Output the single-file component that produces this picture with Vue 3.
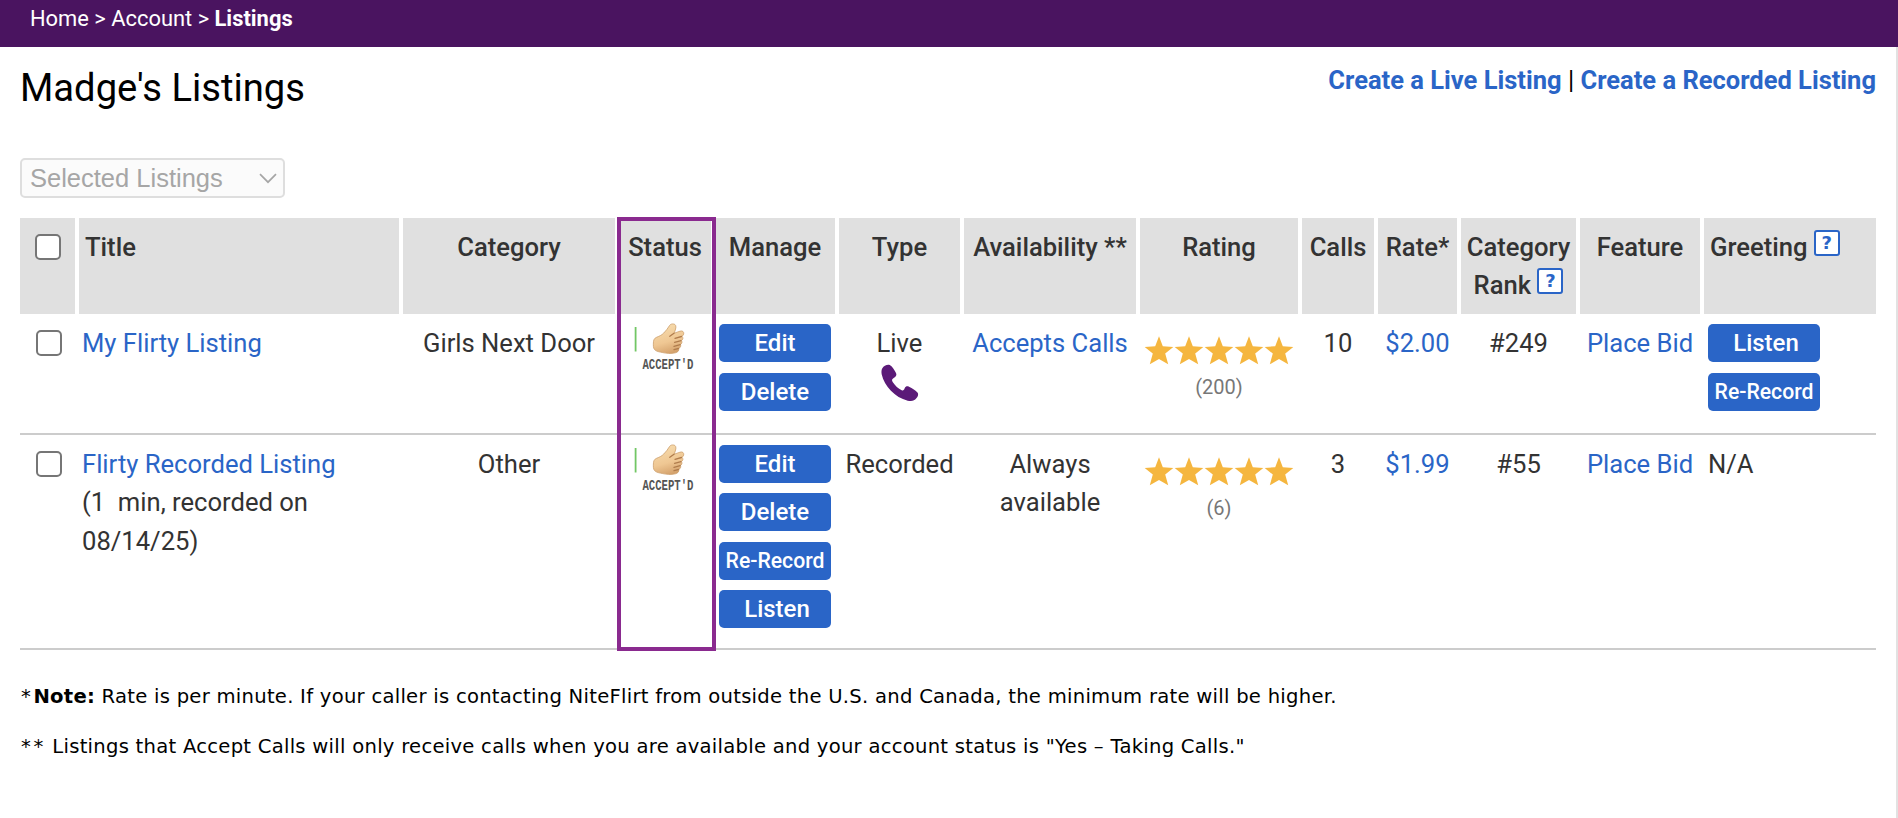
<template>
  <div class="page">
    <nav class="breadcrumb">
      Home &gt; Account &gt; <strong>Listings</strong>
    </nav>

    <main class="content">
      <header class="heading">
        <h1>Madge's Listings</h1>
        <div class="create-links">
          <a>Create a Live Listing</a> | <a>Create a Recorded Listing</a>
        </div>
      </header>

      <div class="bulk-select">
        <span>Selected Listings</span>
        <svg class="chevron" width="18" height="11" viewBox="0 0 18 11">
          <path d="M1 1.2 9 9.2 17 1.2" fill="none" stroke="#a6a6a6" stroke-width="1.7" />
        </svg>
      </div>

      <div class="table-wrap">
        <table class="listings">
          <colgroup>
            <col v-for="col in columns" :key="col.key" :class="`col-${col.key}`" />
          </colgroup>
          <thead>
            <tr>
              <th v-for="col in columns" :key="col.key" :class="col.key">
                <span v-if="col.key === 'check'" class="checkbox"></span>
                {{ col.label }}
                <span v-if="col.help" class="help">?</span>
              </th>
            </tr>
          </thead>
          <tbody>
            <tr v-for="row in listings" :key="row.title" :class="row.kind">
              <td class="check"><span class="checkbox"></span></td>
              <td class="title">
                <a>{{ row.title }}</a>
                <div v-if="row.details" class="details">{{ row.details }}</div>
              </td>
              <td>{{ row.category }}</td>
              <td class="status">
                <svg class="accepted" width="64" height="52" viewBox="0 0 64 52">
                  <defs>
                    <linearGradient id="skin" x1="0.3" y1="0" x2="0.6" y2="1">
                      <stop offset="0" stop-color="#f7dcae" />
                      <stop offset="0.6" stop-color="#efc793" />
                      <stop offset="1" stop-color="#d3a06a" />
                    </linearGradient>
                  </defs>
                  <path d="M2.600 4v24.500" stroke="#72c765" stroke-width="1.800" />
                  <path
                    d="M36.500 2.600C37.500 .6 41.500 .2 42.600 2.400C43.600 4.400 42 7.500 41.200 10.200L47 8.200C49.800 7.300 51 9 50.700 10.900C50.500 12.300 49.500 13 48.800 13.400C50.400 14.200 50.200 16.800 48.300 17.600C49.400 18.800 49 20.800 47.400 21.500C48.200 23 47.400 24.700 45.800 25.400C46.200 27.800 44.500 29.300 42.400 29.800C37.800 30.900 33.500 30.400 29.800 29.600C26.600 28.900 23.400 28.600 21.600 26.600C20.200 25 20.300 22.500 20.400 20C20.500 17.600 20.800 15.600 23.200 14.500C26 13.200 28.600 12.400 30.800 10C32.900 7.700 34.900 5.500 36.500 2.600Z"
                    fill="url(#skin)"
                    stroke="#cda06c"
                    stroke-width="0.800"
                  />
                  <path
                    d="M48.500 13.500L42 15.300M48 17.700L41.600 19.400M47.200 21.700L41 23.300M45.500 25.500L41 26.600M41 10.300L36.800 13.300"
                    fill="none"
                    stroke="#b07c4c"
                    stroke-width="1.300"
                    stroke-linecap="round"
                  />
                  <text x="9.500" y="46" textLength="51" lengthAdjust="spacingAndGlyphs">ACCEPT'D</text>
                </svg>
              </td>
              <td class="manage">
                <div class="buttons">
                  <button v-for="b in row.manage" :key="b" class="btn" :class="b.toLowerCase()">{{ b }}</button>
                </div>
              </td>
              <td>
                {{ row.type }}
                <svg v-if="row.kind === 'live'" class="phone" width="38" height="38" viewBox="34 27 114 114">
                  <path
                    d="M38 40C42 33 52 28 60 30C66 32 74 44 79 54C82 60 79 65 72 69C66 73 66 76 69 81C76 92 86 101 96 106C101 108 103 105 105 100C108 94 112 93 118 95C128 99 138 106 144 113C147 118 145 124 140 130C134 138 126 140 114 137C76 128 44 94 36 58C35 50 35 45 38 40Z"
                    fill="#5b1a78"
                  />
                </svg>
              </td>
              <td>
                <a v-if="row.kind === 'live'">{{ row.availability }}</a>
                <template v-else>{{ row.availability }}</template>
              </td>
              <td class="rating">
                <div class="stars">
                  <svg v-for="n in 5" :key="n" width="30" height="29" viewBox="0 0 30 29">
                    <path d="M15 .3 18.800 10.200 29.300 11 21.200 17.600 24.200 28.300 15 22.900 5.800 28.300 8.800 17.600 .7 11 11.200 10.200Z" fill="#f5b63f" />
                  </svg>
                </div>
                <div class="count">({{ row.ratings }})</div>
              </td>
              <td>{{ row.calls }}</td>
              <td><a>{{ row.rate }}</a></td>
              <td>{{ row.rank }}</td>
              <td><a>Place Bid</a></td>
              <td class="greeting">
                <div v-if="row.greeting.length" class="buttons">
                  <button v-for="b in row.greeting" :key="b" class="btn" :class="b.toLowerCase()">{{ b }}</button>
                </div>
                <template v-else>N/A</template>
              </td>
            </tr>
          </tbody>
        </table>
        <!-- highlight drawn over the status column -->
        <div class="status-highlight"></div>
      </div>

      <p class="note"><span class="mark">*</span><strong>Note:</strong> Rate is per minute. If your caller is contacting NiteFlirt from outside the U.S. and Canada, the minimum rate will be higher.</p>
      <p class="note"><span class="mark">**</span> Listings that Accept Calls will only receive calls when you are available and your account status is "Yes – Taking Calls."</p>
    </main>
  </div>
</template>

<script setup>
import { ref } from "vue";

const columns = [
  { key: "check", label: "" },
  { key: "title", label: "Title" },
  { key: "category", label: "Category" },
  { key: "status", label: "Status" },
  { key: "manage", label: "Manage" },
  { key: "type", label: "Type" },
  { key: "availability", label: "Availability **" },
  { key: "rating", label: "Rating" },
  { key: "calls", label: "Calls" },
  { key: "rate", label: "Rate*" },
  { key: "rank", label: "Category Rank", help: true },
  { key: "feature", label: "Feature" },
  { key: "greeting", label: "Greeting", help: true },
];

const listings = ref([
  {
    kind: "live",
    title: "My Flirty Listing",
    category: "Girls Next Door",
    manage: ["Edit", "Delete"],
    type: "Live",
    availability: "Accepts Calls",
    ratings: 200,
    calls: 10,
    rate: "$2.00",
    rank: "#249",
    greeting: ["Listen", "Re-Record"],
  },
  {
    kind: "recorded",
    title: "Flirty Recorded Listing",
    details: "(1 \u00a0min, recorded on 08/14/25)",
    category: "Other",
    manage: ["Edit", "Delete", "Re-Record", "Listen"],
    type: "Recorded",
    availability: "Always available",
    ratings: 6,
    calls: 3,
    rate: "$1.99",
    rank: "#55",
    greeting: [],
  },
]);
</script>

<style>
body {
  margin: 0;
  background: #fff;
}
</style>

<style scoped>
.page {
  box-sizing: border-box;
  height: 818px;
  overflow: hidden;
  font-family: Roboto, "Liberation Sans", sans-serif;
  font-size: 25.6px;
  color: #333;
}

.breadcrumb {
  box-sizing: border-box;
  height: 47px;
  padding: 6px 30px 0;
  background: #4a1460;
  color: #fff;
  font-size: 21.9px;
  line-height: 26px;
}

.content {
  box-sizing: border-box;
  height: 771px;
  padding: 18px 20px 0;
  border-right: 2px solid #e2e2e2;
}

.heading {
  display: flex;
  justify-content: space-between;
  height: 93px;
  color: #000;
}

h1 {
  margin: 0;
  padding-top: 1px;
  font-size: 38.2px;
  font-weight: 400;
  line-height: 45px;
}

.create-links {
  font-size: 25.5px;
  line-height: 30px;
}

.create-links a {
  font-weight: 700;
}

a {
  color: #2a65c7;
}

.bulk-select {
  box-sizing: border-box;
  display: flex;
  align-items: center;
  justify-content: space-between;
  width: 265px;
  height: 40px;
  margin-bottom: 20px;
  padding: 0 6px 0 8px;
  border: 2px solid #dedede;
  border-radius: 5px;
  background: #fbfbfb;
  color: #a6a6a6;
  font-family: "Liberation Sans", Arial, sans-serif;
  font-size: 25.5px;
  line-height: 36px;
}

.table-wrap {
  position: relative;
}

.listings {
  width: 1856px;
  table-layout: fixed;
  border-spacing: 0;
  line-height: 38.4px;
}

.col-check { width: 59px; }
.col-title { width: 324px; }
.col-category { width: 216px; }
.col-status { width: 96px; }
.col-manage { width: 124px; }
.col-type { width: 125px; }
.col-availability { width: 176px; }
.col-rating { width: 162px; }
.col-calls { width: 76px; }
.col-rate { width: 83px; }
.col-rank { width: 119px; }
.col-feature { width: 124px; }
.col-greeting { width: 172px; }

th,
td {
  box-sizing: border-box;
  padding: 10px 0 0;
  text-align: center;
  vertical-align: top;
}

th {
  height: 96px;
  border-right: 4px solid #fff;
  background: #e0e0e0;
  font-weight: 500;
}

th:last-child {
  border-right: 0;
}

td {
  padding-right: 4px;
  border-bottom: 2px solid #ccc;
}

.live td {
  height: 121px;
}

.recorded td {
  height: 215px;
}

th.title,
th.greeting {
  padding-left: 6px;
  text-align: left;
}

td.title {
  padding-left: 3px;
  text-align: left;
}

td.greeting {
  padding-left: 4px;
  text-align: left;
}

.details {
  width: 260px;
}

.checkbox {
  box-sizing: border-box;
  display: block;
  width: 26px;
  height: 26px;
  margin: 6px auto 0;
  border: 2px solid #767676;
  border-radius: 5px;
  background: #fff;
}

td .checkbox {
  margin-left: 16px;
}

/* overflow: hidden rests the box on the text baseline */
.help {
  box-sizing: border-box;
  display: inline-block;
  width: 26px;
  height: 26px;
  overflow: hidden;
  border: 2px solid #2a65c7;
  border-radius: 3px;
  background: #fff;
  color: #2a65c7;
  font-family: "DejaVu Sans", sans-serif;
  font-size: 18px;
  font-weight: 700;
  line-height: 22px;
  text-align: center;
}

.accepted {
  display: block;
  margin: -1px 0 0 14px;
  overflow: visible;
}

.accepted text {
  fill: #555;
  font-family: "Liberation Mono", monospace;
  font-size: 14px;
  font-weight: 700;
}

.buttons {
  display: flex;
  flex-direction: column;
  gap: 10.4px;
}

.live .buttons {
  gap: 11px;
}

.manage .buttons {
  align-items: center;
}

.btn {
  width: 112px;
  height: 38px;
  padding: 0;
  border: 0;
  border-radius: 5px;
  background: #2a65c7;
  color: #fff;
  font-family: inherit;
  font-size: 24px;
  font-weight: 500;
  line-height: 38px;
}

.btn.re-record {
  font-size: 21.2px;
}

.btn.listen {
  padding-left: 4px;
}

.phone {
  display: block;
  margin: 2px auto 0;
}

.stars {
  display: flex;
  justify-content: center;
  padding-top: 12px;
}

.count {
  margin-top: 9px;
  color: #777;
  font-size: 20px;
  line-height: 26px;
}

.status-highlight {
  position: absolute;
  top: -1px;
  left: 597px;
  box-sizing: border-box;
  width: 99px;
  height: 434px;
  border: 4px solid #8a2a8f;
}

.note {
  margin: 0 0 26px;
  padding-left: 1px;
  color: #000;
  font-family: Verdana, "DejaVu Sans", sans-serif;
  font-size: 19.6px;
  letter-spacing: 0.26px;
  line-height: 24px;
  white-space: nowrap;
}

.note .mark {
  letter-spacing: 2.6px;
}

.table-wrap + .note {
  margin-top: 35px;
}
</style>
